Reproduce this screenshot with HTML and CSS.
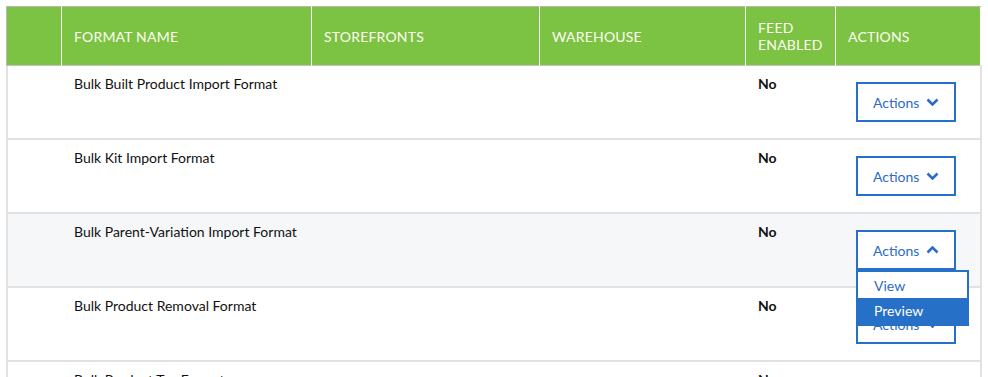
FILE: index.html
```html
<!DOCTYPE html>
<html lang="en">
<head>
    <meta charset="UTF-8">
    <title>Feed Formats</title>
    <link rel="stylesheet" href="styles.css">
</head>
<body>
    <div class="wrap">
        <table class="formats">
            <colgroup>
                <col class="c-check">
                <col class="c-name">
                <col class="c-store">
                <col class="c-ware">
                <col class="c-feed">
                <col class="c-act">
            </colgroup>
            <thead>
                <tr>
                    <th></th>
                    <th>Format Name</th>
                    <th>Storefronts</th>
                    <th>Warehouse</th>
                    <th>Feed<br>Enabled</th>
                    <th>Actions</th>
                </tr>
            </thead>
            <tbody>
                <tr>
                    <td></td>
                    <td>Bulk Built Product Import Format</td>
                    <td></td>
                    <td></td>
                    <td class="bold">No</td>
                    <td>
                        <button class="act-btn">Actions
                            <svg width="13" height="8" viewBox="0 0 13 8"><path d="M1.5 1.5l5 5 5-5" fill="none" stroke="currentColor" stroke-width="2.6"/></svg>
                        </button>
                    </td>
                </tr>
                <tr>
                    <td></td>
                    <td>Bulk Kit Import Format</td>
                    <td></td>
                    <td></td>
                    <td class="bold">No</td>
                    <td>
                        <button class="act-btn">Actions
                            <svg width="13" height="8" viewBox="0 0 13 8"><path d="M1.5 1.5l5 5 5-5" fill="none" stroke="currentColor" stroke-width="2.6"/></svg>
                        </button>
                    </td>
                </tr>
                <tr class="hovered">
                    <td></td>
                    <td>Bulk Parent-Variation Import Format</td>
                    <td></td>
                    <td></td>
                    <td class="bold">No</td>
                    <td>
                        <div class="dropdown">
                            <button class="act-btn">Actions
                                <svg width="13" height="8" viewBox="0 0 13 8"><path d="M1.5 6.5l5-5 5 5" fill="none" stroke="currentColor" stroke-width="2.6"/></svg>
                            </button>
                            <ul class="menu">
                                <li>View</li>
                                <li class="active">Preview</li>
                            </ul>
                        </div>
                    </td>
                </tr>
                <tr>
                    <td></td>
                    <td>Bulk Product Removal Format</td>
                    <td></td>
                    <td></td>
                    <td class="bold">No</td>
                    <td>
                        <button class="act-btn">Actions
                            <svg width="13" height="8" viewBox="0 0 13 8"><path d="M1.5 1.5l5 5 5-5" fill="none" stroke="currentColor" stroke-width="2.6"/></svg>
                        </button>
                    </td>
                </tr>
                <tr>
                    <td></td>
                    <td>Bulk Product Tag Format</td>
                    <td></td>
                    <td></td>
                    <td class="bold">No</td>
                    <td>
                        <button class="act-btn">Actions
                            <svg width="13" height="8" viewBox="0 0 13 8"><path d="M1.5 1.5l5 5 5-5" fill="none" stroke="currentColor" stroke-width="2.6"/></svg>
                        </button>
                    </td>
                </tr>
            </tbody>
        </table>
    </div>
</body>
</html>
```

FILE: styles.css
```css
body {
    margin: 0;
    font-family: 'Lato', 'Liberation Sans', sans-serif;
    font-size: 14px;
    color: #111;
    background: #fff;
    overflow: hidden;
}
.wrap {
    padding: 6px 6px 0 6px;
}
.formats {
    width: 976px;
    table-layout: fixed;
    border-collapse: separate;
    border-spacing: 0;
}
.c-check { width: 56px; }
.c-name { width: 250px; }
.c-store { width: 228px; }
.c-ware { width: 206px; }
.c-feed { width: 90px; }
.c-act { width: 146px; }

th {
    background-color: #7cc243;
    color: #fdfdf0;
    font-weight: normal;
    text-transform: uppercase;
    letter-spacing: 0.2px;
    text-align: left;
    height: 58px;
    padding: 0 12px;
    line-height: 17px;
    border-top: 1px solid #b9b9b9;
    border-right: 1px solid #fff;
    border-bottom: 1px solid #c4c4c4;
    vertical-align: middle;
}
th:first-child {
    border-left: 1px solid #b9b9b9;
}
th:last-child {
    border-right: 2px solid #fff;
}
td {
    height: 72px;
    padding: 9px 12px 0 12px;
    vertical-align: top;
    line-height: 17px;
    border-bottom: 2px solid #e1e1e1;
    box-sizing: border-box;
}
tbody tr {
    height: 74px;
}
td:first-child {
    border-left: 2px solid #e1e1e1;
}
td:last-child {
    border-right: 2px solid #e1e1e1;
    padding: 16px 0 0 20px;
}
.hovered td {
    background-color: #f6f7f9;
}
.bold {
    font-weight: bold;
}
.dropdown {
    position: relative;
    width: 100px;
}
.act-btn {
    width: 100px;
    height: 40px;
    padding: 0 0 0 15px;
    border: 2px solid #2670c8;
    background: #fff;
    color: #2b6cc4;
    font-family: inherit;
    font-size: 14px;
    text-align: left;
    display: flex;
    align-items: center;
    gap: 7px;
    cursor: pointer;
}
.menu {
    position: absolute;
    top: 40px;
    left: 0;
    width: 113px;
    margin: 0;
    padding: 0;
    list-style: none;
    background: #fff;
    border: 2px solid #2670c8;
    box-sizing: border-box;
    z-index: 5;
}
.menu li {
    height: 26px;
    line-height: 28px;
    padding-left: 16px;
    color: #2b6cc4;
}
.menu li.active {
    line-height: 26px;
    background-color: #2670c8;
    color: #fff;
}
```
